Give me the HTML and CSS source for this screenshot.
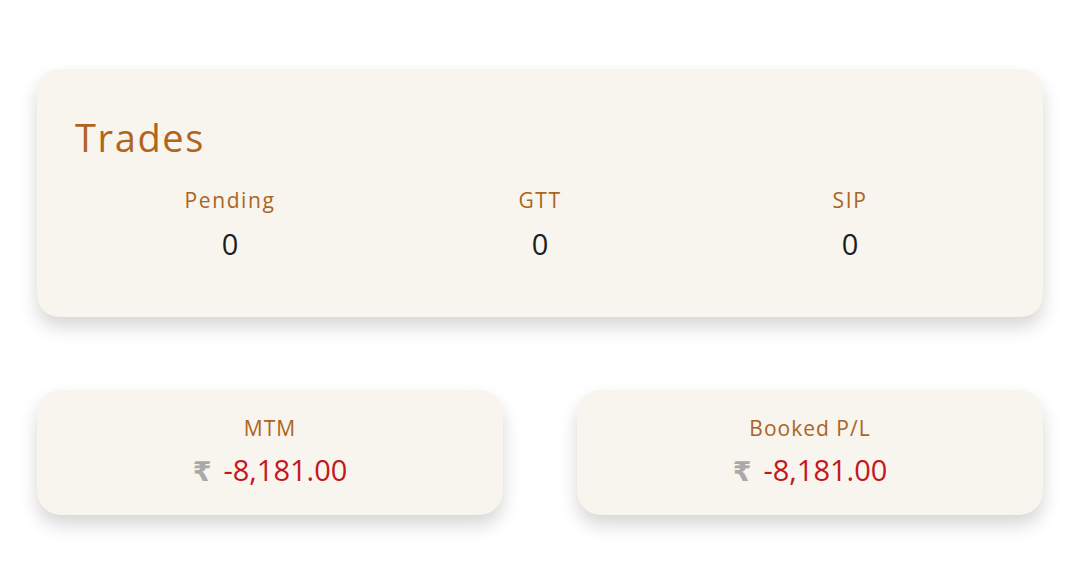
FILE: index.html
```html
<!DOCTYPE html>
<html lang="en">
<head>
    <meta charset="UTF-8">
    <meta name="viewport" content="width=device-width, initial-scale=1.0">
    <title>Trades</title>
    <link rel="stylesheet" href="styles.css">
</head>
<body>
    <div class="page">
        <div class="card trades">
            <h1>Trades</h1>
            <div class="stats">
                <div class="stat">
                    <p class="label">Pending</p>
                    <p class="count">0</p>
                </div>
                <div class="stat">
                    <p class="label">GTT</p>
                    <p class="count">0</p>
                </div>
                <div class="stat">
                    <p class="label">SIP</p>
                    <p class="count">0</p>
                </div>
            </div>
        </div>

        <div class="summary">
            <div class="card small">
                <p class="label">MTM</p>
                <p class="amount"><span class="rupee">₹</span><span class="loss">-8,181.00</span></p>
            </div>
            <div class="card small">
                <p class="label">Booked P/L</p>
                <p class="amount"><span class="rupee">₹</span><span class="loss">-8,181.00</span></p>
            </div>
        </div>
    </div>
</body>
</html>
```

FILE: styles.css
```css
/* Base */
body {
    font-family: 'Open Sans', 'Noto Sans', sans-serif;
    margin: 0;
    padding: 0;
    background: #fff;
    color: #222;
}

p, h1 {
    margin: 0;
}

.page {
    padding: 69px 37px 65px 37px;
}

/* Cards */
.card {
    background: #f8f4ee;
    border-radius: 22px;
    box-shadow: 0px 10px 18px rgba(0, 0, 0, 0.16);
}

.trades {
    height: 248px;
    box-sizing: border-box;
    padding: 44px 38px 0 38px;
}

.trades h1 {
    font-size: 38px;
    font-weight: 400;
    color: #b0651c;
    line-height: 48px;
    letter-spacing: 1.6px;
}

.stats {
    display: grid;
    grid-template-columns: repeat(3, 1fr);
    margin-top: 24px;
}

.stat {
    text-align: center;
}

.label {
    font-size: 21px;
    color: #ab6522;
    line-height: 30px;
    letter-spacing: 1.6px;
}

.count {
    font-size: 29px;
    line-height: 40px;
    margin-top: 9px;
    color: #1d1d1d;
}

/* MTM / P&L */
.summary {
    display: flex;
    gap: 74px;
    margin-top: 73px;
}

.small {
    flex: 1;
    height: 125px;
    box-sizing: border-box;
    padding-top: 23px;
    text-align: center;
    border-radius: 24px;
}

.small .label {
    letter-spacing: 1px;
}

.amount {
    font-size: 29px;
    line-height: 40px;
    margin-top: 7px;
}

.rupee {
    color: #a9a9a9;
    font-family: 'DejaVu Sans', sans-serif;
    font-weight: 700;
    font-size: 27px;
    margin-right: 12px;
}

.loss {
    color: #c4171d;
}
```
